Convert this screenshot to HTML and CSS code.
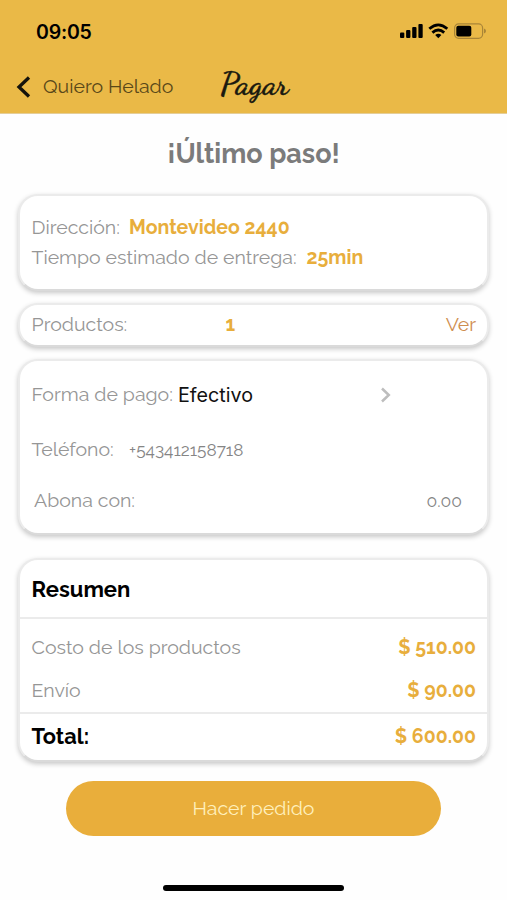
FILE: index.html
```html
<!DOCTYPE html>
<html lang="es">
<head>
<meta charset="utf-8">
<meta name="viewport" content="width=device-width, initial-scale=1">
<title>Pagar</title>
<link rel="stylesheet" href="styles.css">
</head>
<body>
<header class="header">
  <div class="status">
    <span class="time">09:05</span>
    <svg class="status-icons" width="88" height="18" viewBox="0 0 88 18">
      <rect x="1" y="10.5" width="4.300" height="5.5" rx="1"/>
      <rect x="7.1" y="8" width="4.300" height="8" rx="1"/>
      <rect x="13.2" y="5" width="4.300" height="11" rx="1"/>
      <rect x="19.4" y="2" width="4.300" height="14" rx="1"/>
      <g fill="none" stroke="#000" stroke-width="2.8">
        <path d="M30.3 6.800Q39.3-1 48.3 6.800"/>
        <path d="M33.4 10.600Q39.3 5.400 45.2 10.600"/>
      </g>
      <path d="M36.2 13Q39.3 10.5 42.4 13L39.3 16.3Z"/>
      <rect x="55.6" y="1.9" width="28" height="14.4" rx="4" fill="none" stroke="#a98537" stroke-width="1.2"/>
      <rect x="57.3" y="3.7" width="15" height="10.8" rx="2"/>
      <path d="M85 6.5Q87 7.3 87 9Q87 10.700 85 11.500Z" fill="#a98537"/>
    </svg>
  </div>
  <nav class="nav">
    <svg class="back-icon" width="16" height="24" viewBox="0 0 16 24"><path d="M13 2.500L3 12L13 21.500" fill="none" stroke="#15130c" stroke-width="3.300"/></svg>
    <span class="back-label">Quiero Helado</span>
    <h1 class="brand">Pagar</h1>
  </nav>
</header>
<main class="content">
  <h2 class="title">¡Último paso!</h2>
  <section class="card delivery">
    <p class="line"><span class="label l-dir">Dirección:</span><strong class="value">Montevideo 2440</strong></p>
    <p class="line"><span class="label l-time">Tiempo estimado de entrega:</span><strong class="value">25min</strong></p>
  </section>
  <section class="card products">
    <span class="label">Productos:</span><strong class="value count">1</strong><a class="view">Ver</a>
  </section>
  <section class="card payment">
    <div class="row method"><span class="label l-pay">Forma de pago:</span><span class="method-name">Efectivo</span>
      <svg class="chevron" width="12" height="18" viewBox="0 0 12 18"><path d="M2 2.500L8.800 9L2 15.500" fill="none" stroke="#bdbdbd" stroke-width="2.500"/></svg>
    </div>
    <div class="row phone"><span class="label l-tel">Teléfono:</span><span class="number">+543412158718</span></div>
    <div class="row cash"><span class="label">Abona con:</span><span class="amount">0.00</span></div>
  </section>
  <section class="card summary">
    <h3 class="heading">Resumen</h3>
    <div class="costs">
      <div class="cost"><span class="label">Costo de los productos</span><strong class="value">$ 510.00</strong></div>
      <div class="cost"><span class="label">Envío</span><strong class="value">$ 90.00</strong></div>
    </div>
    <div class="cost total"><span class="total-label">Total:</span><strong class="value">$ 600.00</strong></div>
  </section>
  <button class="order">Hacer pedido</button>
</main>
<div class="home-bar"></div>
</body>
</html>
```
FILE: styles.css
```css
* { box-sizing: border-box; }
body {
  margin: 0;
  height: 900px;
  display: flex;
  flex-direction: column;
  background: #fefefe;
  font-family: Raleway, Lato, sans-serif;
  font-size: 19.500px;
  line-height: 30px;
  font-variant-numeric: oldstyle-nums;
  overflow: hidden;
}
h1, h2, h3, p { margin: 0; }
.header { height: 114px; background: #eab947; border-bottom: 1px solid #e5ce98; }
.status { height: 62px; padding: 2px 20px 0 36px; display: flex; align-items: center; justify-content: space-between; }
.time { font: 600 19.500px Inter, sans-serif; letter-spacing: -0.2px; }
.status-icons { margin-top: -2px; }
.nav { height: 50px; display: flex; align-items: center; padding-left: 16px; }
.back-label { margin-left: 11px; width: 177px; color: #594819; font-size: 19.500px; white-space: nowrap; }
.brand { font: 700 32px "Dancing Script", "Kaushan Script", cursive; color: #1b1a10; transform: translateY(-3px); -webkit-text-stroke: 0.3px #1b1a10; }
.content { padding: 0 18px; flex: 1; display: flex; flex-direction: column; }
.title { margin-top: 25px; height: 55px; text-align: center; font-size: 27px; font-weight: 700; color: #7b7b7b; }
.card {
  background: #fff;
  border: 2px solid #ebebeb;
  border-bottom-color: #dadada;
  border-radius: 20px;
  box-shadow: 0 2px 5px rgba(0, 0, 0, 0.22);
}
.label { color: #969696; white-space: nowrap; }
.value { color: #e8ae3c; font-weight: 700; }
.delivery { height: 97px; padding: 17px 11px 0 11.500px; }
.line { display: flex; height: 30px; }
.l-dir { width: 97.500px; }
.l-time { width: 275px; }
.products { height: 44px; margin-top: 12px; padding: 0 11px 0 11.500px; display: grid; grid-template-columns: 194px 1fr auto; align-items: center; }
.view { color: #cf8e50; }
.payment { height: 176px; margin-top: 12px; padding: 19px 11px 0 11.500px; }
.row { display: flex; align-items: center; height: 30px; }
.l-pay { width: 146.500px; }
.method-name { width: 201.500px; font-family: Inter, sans-serif; font-size: 19.700px; color: #111; }
.phone { margin-top: 25px; }
.l-tel { width: 97.500px; }
.number { font-size: 17.200px; color: #858585; }
.amount { font-size: 17.500px; color: #858585; }
.cash { margin-top: 21px; padding: 0 14px 0 2.500px; justify-content: space-between; }
.summary { height: 204px; margin-top: 23px; }
.heading { height: 59px; padding: 14px 11.500px 0; font-size: 22px; line-height: 30px; border-bottom: 2px solid #ebebeb; }
.costs { height: 95px; padding: 14px 0 0; border-bottom: 2px solid #ebebeb; }
.cost { display: flex; justify-content: space-between; padding: 0 11px 0 11.500px; height: 43px; }
.total { padding-top: 8px; }
.total-label { font-size: 21.800px; font-weight: 700; }
.order {
  width: 375px;
  height: 55px;
  margin: 19px auto 0;
  border: 0;
  border-radius: 28px;
  background: #e9ae3b;
  color: #fff0bd;
  font: 19.500px Raleway, Lato, sans-serif;
}
.home-bar { width: 181px; height: 6px; margin: 0 auto 9px; border-radius: 3px; background: #000; }
```
